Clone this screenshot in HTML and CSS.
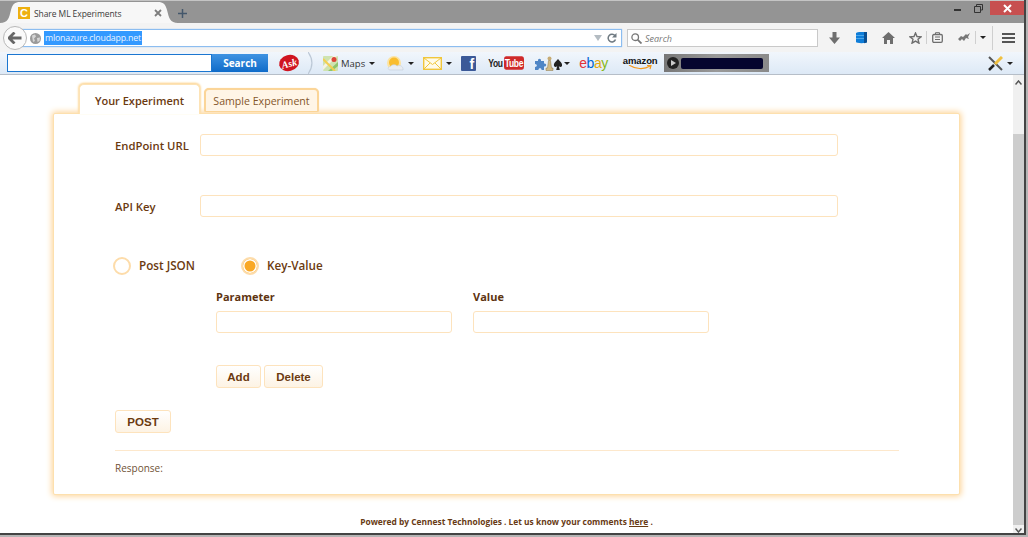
FILE: index.html
```html
<!DOCTYPE html>
<html lang="en">
<head>
<meta charset="utf-8">
<title>Share ML Experiments</title>
<link rel="stylesheet" href="styles.css">
</head>
<body>
<div class="window">
  <header class="titlebar">
    <div class="browser-tab">
      <svg class="tab-shape" width="178" height="23" viewBox="0 0 178 23"><path d="M0 23C8 23 9 18 11 10C12.500 4 15 2 20 2H158C163 2 165.500 4 167 10C169 18 170 23 178 23Z" fill="#f7f7f7"/></svg>
      <span class="favicon">C</span>
      <span class="tab-title">Share ML Experiments</span>
      <svg class="tab-close" width="8" height="8" viewBox="0 0 8 8"><path d="M1 1L7 7M7 1L1 7" stroke="#7d7d7d" stroke-width="1.800"/></svg>
    </div>
    <svg class="new-tab" width="9" height="9" viewBox="0 0 9 9"><path d="M4.500 0V9M0 4.500H9" stroke="#44576b" stroke-width="1.500"/></svg>
    <div class="window-controls">
      <span class="win-min"></span>
      <svg class="win-restore" width="9" height="9" viewBox="0 0 9 9"><path d="M2.500 2V.5H8.500V6H7M.5 2.500H6.500V8.500H.5Z" fill="none" stroke="#333"/></svg>
      <span class="win-close"><svg width="9" height="9" viewBox="0 0 9 9"><path d="M1 1L8 8M8 1L1 8" stroke="#fff" stroke-width="2"/></svg></span>
    </div>
  </header>

  <nav class="navbar">
    <span class="back-btn"><svg width="14" height="12" viewBox="0 0 14 12"><path d="M6.500 .5L1 6L6.500 11.500M1.500 6H13.500" fill="none" stroke="#666" stroke-width="2.800"/></svg></span>
    <div class="urlbar">
      <svg class="globe" width="11" height="11" viewBox="0 0 11 11"><circle cx="5.500" cy="5.500" r="5.500" fill="#9a9a9a"/><path d="M2 2.500L5 1.500L6 3.500L4 5.500L5 8L3 9ZM7 5L10 4.500L9.500 8L7.500 9Z" fill="#d5d5d5"/></svg>
      <span class="url-text">mlonazure.cloudapp.net</span>
      <svg class="url-drop" width="8" height="6" viewBox="0 0 8 6"><path d="M0 0H8L4 6Z" fill="#b4bcc2"/></svg>
      <svg class="url-reload" width="10" height="10" viewBox="0 0 10 10"><path d="M8.500 6.500A3.800 3.800 0 1 1 8 2.800" fill="none" stroke="#6f7a82" stroke-width="1.500"/><path d="M9.500 0V4.500H5Z" fill="#6f7a82"/></svg>
    </div>
    <div class="searchbar">
      <svg width="11" height="11" viewBox="0 0 11 11"><circle cx="4.200" cy="4.200" r="3.300" fill="none" stroke="#777" stroke-width="1.300"/><path d="M6.800 6.800L10.500 10.500" stroke="#777" stroke-width="1.800"/></svg>
      <span class="search-ph">Search</span>
    </div>
    <div class="nav-icons">
      <svg class="ni-download" width="11" height="12" viewBox="0 0 11 12"><path d="M3.500 0H7.500V5.500H11L5.500 12L0 5.500H3.500Z" fill="#6e6e6e"/></svg>
      <svg class="ni-db" width="11" height="13" viewBox="0 0 11 13"><path d="M0 2C0 .5 11 .5 11 2V11C11 12.500 0 12.500 0 11Z" fill="#0f7dd8"/><path d="M0 4.500H11M0 7.500H11" stroke="#4aa6ea"/><path d="M8 1H11V11C11 11.800 9.500 12 8 12.200Z" fill="#0a4f92"/></svg>
      <svg class="ni-home" width="13" height="12" viewBox="0 0 13 12"><path d="M6.500 0L13 6H11V12H8V8H5V12H2V6H0Z" fill="#6e6e6e"/></svg>
      <svg class="ni-star" width="13" height="12" viewBox="0 0 13 12"><path d="M6.500 1L8 4.500L12 4.800L9 7.300L10 11.200L6.500 9.100L3 11.200L4 7.300L1 4.800L5 4.500Z" fill="none" stroke="#6e6e6e" stroke-width="1.400"/></svg>
      <span class="ni-sep"></span>
      <svg class="ni-clip" width="11" height="11" viewBox="0 0 11 11"><rect x=".7" y="2.500" width="9.600" height="7.800" rx="1.200" fill="none" stroke="#6e6e6e" stroke-width="1.300"/><path d="M3.500 2.500V.7H7.500V2.500M3 5H8M3 7.500H8" fill="none" stroke="#6e6e6e"/></svg>
      <svg class="ni-bat" width="12" height="9" viewBox="0 0 12 9"><path d="M0 6L3 3L5 4L8 1L9 2L12 0L10 4L11 6L8 5L6 8L4 6L2 8Z" fill="#777"/></svg>
      <span class="ni-sep ni-sep-b"></span>
      <span class="caret caret-dark"></span>
      <span class="ni-sep ni-sep-tall"></span>
      <span class="menu-btn"><i></i><i></i><i></i></span>
    </div>
  </nav>

  <div class="bookmarks">
    <div class="bm-search"><span class="bm-input"></span><span class="bm-button">Search</span></div>
    <span class="ask"><span>Ask</span></span>
    <svg class="bm-curve" width="5" height="22" viewBox="0 0 5 22"><path d="M0 0C5 7 5 15 0 22" fill="none" stroke="#bcc8d6" stroke-width="1.200"/></svg>
    <svg class="bm-maps" width="15" height="15" viewBox="0 0 15 15"><rect width="15" height="15" rx="1" fill="#cfe3b0"/><path d="M0 10L10 0H14L0 14Z" fill="#f6f2e4"/><path d="M5 15L15 6V10L9 15Z" fill="#8ec56b"/><path d="M0 3L12 15" stroke="#f4cf50" stroke-width="2"/><circle cx="11" cy="3.500" r="2.500" fill="#dc4437"/></svg>
    <span class="bm-label">Maps</span>
    <span class="caret"></span>
    <svg class="bm-weather" width="18" height="15" viewBox="0 0 18 15"><circle cx="8" cy="7" r="7" fill="#fce3a0"/><circle cx="8" cy="6.500" r="5" fill="#f9bd2e"/><path d="M4 14C1.500 14 1.500 10.500 4.500 10.500C5.500 8.500 9.500 8 11 10C14 8.500 17.500 10.500 17 14Z" fill="#e9edf2" stroke="#c5ced8" stroke-width=".6"/></svg>
    <span class="caret"></span>
    <svg class="bm-mail" width="19" height="13" viewBox="0 0 19 13"><rect x=".7" y=".7" width="17.600" height="11.600" fill="#fffbe8" stroke="#f0c63c" stroke-width="1.400"/><path d="M1 1L9.500 7.500L18 1M1 12L7 6M18 12L12 6" fill="none" stroke="#f0c63c"/></svg>
    <span class="caret"></span>
    <span class="fb">f</span>
    <span class="yt">You<b>Tube</b></span>
    <svg class="bm-puzzle" width="29" height="15" viewBox="0 0 29 15"><path d="M1 5H4C3.500 2 7.500 2 7 5H10V7.500C13 7 13 11 10 10.500V14H7.500C8 11.500 4 11.500 4.500 14H1V11C3.500 11 3.500 8 1 8Z" fill="#4f86c6"/><circle cx="15.500" cy="2.500" r="2" fill="#c7ab74"/><path d="M14.500 4.500H16.500L17.500 12H19V14.500H12V12H13.500Z" fill="#d3bc86" stroke="#8d7748" stroke-width=".5"/><path d="M24 3C26.500 6 28.500 7 28 10C27 11.500 25.500 11 24.800 10L25.800 14H22.200L23.200 10C22.500 11 21 11.500 20 10C19.500 7 21.500 6 24 3Z" fill="#222"/></svg>
    <span class="caret caret-tight"></span>
    <span class="ebay"><i class="e-r">e</i><i class="e-b">b</i><i class="e-y">a</i><i class="e-g">y</i></span>
    <span class="amazon">amazon<svg width="24" height="5" viewBox="0 0 24 5"><path d="M1 0C7 4 16 5 22 1M19 0.500L23 .5L22 4" fill="none" stroke="#f39a1d" stroke-width="1.200"/></svg></span>
    <div class="player">
      <span class="play-btn"><svg width="6" height="6" viewBox="0 0 6 6"><path d="M1 0L6 3L1 6Z" fill="#ccc"/></svg></span>
      <span class="play-bar"></span>
    </div>
    <svg class="bm-tools" width="15" height="15" viewBox="0 0 15 15"><path d="M1 1L14 14" stroke="#555" stroke-width="2"/><path d="M14 1L7 8" stroke="#f0c040" stroke-width="3"/><path d="M6 9L1 14" stroke="#222" stroke-width="2.500"/></svg>
    <span class="caret"></span>
  </div>

  <div class="viewport">
    <main class="page">
      <div class="tabs">
        <span class="tab tab-active">Your Experiment</span>
        <span class="tab tab-idle">Sample Experiment</span>
      </div>
      <section class="card">
        <div class="field field-url">
          <label class="field-label">EndPoint URL</label>
          <span class="input input-wide"></span>
        </div>
        <div class="field field-key">
          <label class="field-label">API Key</label>
          <span class="input input-wide"></span>
        </div>
        <div class="radios">
          <span class="radio"></span><span class="radio-label">Post JSON</span>
          <span class="radio radio-on"></span><span class="radio-label">Key-Value</span>
        </div>
        <div class="params">
          <div class="param">
            <div class="param-label">Parameter</div>
            <span class="input input-param"></span>
          </div>
          <div class="param">
            <div class="param-label">Value</div>
            <span class="input input-param"></span>
          </div>
        </div>
        <div class="actions">
          <span class="btn btn-add">Add</span>
          <span class="btn btn-del">Delete</span>
        </div>
        <span class="btn btn-post">POST</span>
        <hr class="rule">
        <div class="response">Response:</div>
      </section>
      <footer class="footer">Powered by Cennest Technologies . Let us know your comments <a>here</a> .</footer>
    </main>
    <aside class="scrollbar">
      <svg width="7" height="5" viewBox="0 0 7 5"><path d="M.5 4.500L3.500 1L6.500 4.500" fill="none" stroke="#555" stroke-width="1.500"/></svg>
      <span class="thumb"></span>
      <svg width="7" height="5" viewBox="0 0 7 5"><path d="M.5 .5L3.500 4L6.500 .5" fill="none" stroke="#555" stroke-width="1.500"/></svg>
    </aside>
  </div>
</div>
</body>
</html>
```
FILE: styles.css
```css
* { box-sizing: border-box; }
html, body { margin: 0; height: 100%; overflow: hidden; background: #b5b5b5; }
body { font-family: "Open Sans", "Liberation Sans", sans-serif; color: #6b3a10; }

.window {
  width: 1026px; height: 535px; display: flex; flex-direction: column;
  background: #fff; border-right: 2px solid #444; border-bottom: 2px solid #444;
}

/* title bar */
.titlebar {
  height: 23px; flex: none; display: flex; align-items: flex-start;
  background: #949494; border-top: 1px solid #c4c4c4;
}
.browser-tab {
  position: relative; width: 178px; height: 22px; flex: none;
  display: flex; align-items: center; padding: 2px 0 0 18px;
}
.tab-shape { position: absolute; left: 0; top: -1px; }
.favicon {
  position: relative; width: 12px; height: 12px; background: #eeb00f; color: #fff;
  font: bold 11px/12px "Liberation Sans", sans-serif; text-align: center;
}
.tab-title { position: relative; margin-left: 4px; font-size: 8.500px; letter-spacing: -.08px; color: #3b3b3b; width: 114px; white-space: nowrap; }
.tab-close { position: relative; margin-left: 6px; }
.new-tab { margin: 8px 0 0 0; }
.window-controls { margin-left: auto; display: flex; align-items: flex-start; }
.win-min { width: 7px; height: 2px; background: #333; margin: 8px 13px 0 0; }
.win-restore { margin: 3px 7px 0 0; }
.win-close { width: 34px; height: 14px; background: #c75050; display: flex; align-items: center; justify-content: center; }

/* nav bar */
.navbar {
  height: 29px; flex: none; display: flex; align-items: center;
  background: #f3f3f3; padding: 0 0 0 3px; position: relative;
}
.back-btn {
  width: 24px; height: 24px; border-radius: 50%; background: #fafafa; border: 1px solid #b8b8b8;
  display: flex; align-items: center; justify-content: center; flex: none; position: relative; z-index: 1;
}
.urlbar {
  width: 607px; height: 18px; margin: 1px 0 0 -12px; flex: none; display: flex; align-items: center;
  background: #fff; border: 1px solid #8cbdf0; box-shadow: 0 0 1px #8cbdf0; padding: 0 4px 0 14px;
}
.globe { flex: none; }
.url-text {
  margin-left: 3px; background: #3399ff; color: #e8f3ff; font-size: 8.800px; letter-spacing: -.2px; line-height: 14px; padding: 0 1px; white-space: nowrap;
}
.url-drop { margin-left: auto; }
.url-reload { margin-left: 5px; }
.searchbar {
  width: 191px; height: 18px; margin: 1px 0 0 5px; flex: none; display: flex; align-items: center; gap: 3px;
  background: #fff; border: 1px solid #c9c9c9; padding-left: 3px;
}
.search-ph { font-size: 9px; font-style: italic; color: #777; }
.nav-icons { display: flex; align-items: center; flex: 1; height: 100%; position: relative; }
.ni-download { margin-left: 11px; }
.ni-db { margin-left: 16px; }
.ni-home { margin-left: 15px; }
.ni-star { margin-left: 14px; }
.ni-sep { width: 1px; height: 13px; background: #cfcfcf; margin-left: 4px; }
.ni-clip { margin-left: 5px; }
.ni-bat { margin-left: 15px; }
.ni-sep-b { margin-left: 5px; }
.caret { width: 0; height: 0; border: 3px solid transparent; border-top: 3px solid #222; border-bottom: 0; flex: none; }
.caret-dark { margin-left: 4px; border-width: 3px 3px 0; }
.ni-sep-tall { height: 24px; margin-left: 6px; }
.menu-btn { display: flex; flex-direction: column; gap: 2px; width: 13px; margin-left: 9px; }
.menu-btn i { display: block; height: 2px; background: #555; }

/* bookmarks */
.bookmarks {
  height: 23px; flex: none; display: flex; align-items: center; padding: 0 11px 0 7px;
  background: linear-gradient(#f1f6fc, #dde9f6); border-bottom: 1px solid #b6bec8;
}
.bm-search { display: flex; width: 261px; height: 18px; flex: none; }
.bm-input { width: 205px; background: #fff; border: 1px solid #1b76d0; }
.bm-button {
  width: 56px; background: linear-gradient(#3f93e2, #0f6bc9); color: #fff; font-size: 10px; font-weight: 700;
  text-align: center; line-height: 18px;
}
.ask {
  width: 20px; height: 16px; margin-left: 11px; border-radius: 50%; background: #d01420; color: #fff; flex: none;
  display: flex; align-items: center; justify-content: center; font: italic bold 10px "Liberation Serif", serif;
  transform: rotate(-14deg);
}
.bm-curve { margin-left: 9px; }
.bm-maps { margin-left: 10px; }
.bm-label { margin-left: 3px; font-size: 9.500px; color: #333; }
.bookmarks .caret { margin-left: 4px; }
.bookmarks .caret-tight { margin-left: 1px; }
.bm-weather { margin-left: 11px; }
.bm-mail { margin-left: 9px; }
.fb {
  width: 15px; height: 15px; margin-left: 9px; background: #3b5998; color: #fff; flex: none;
  font: bold 14px/17px "Liberation Sans", sans-serif; text-align: right; padding-right: 2px; border-radius: 1px;
}
.yt {
  margin-left: 12px; width: 34px; flex: none; display: flex; align-items: center; font: bold 8.500px "Liberation Sans", sans-serif; color: #222;
  letter-spacing: -.3px; transform: scaleY(1.350); white-space: nowrap;
}
.yt b { background: #cf2a2a; color: #fff; border-radius: 2px; padding: 0 1px; margin-left: 1px; line-height: 10px; }
.bm-puzzle { margin-left: 12px; }
.ebay { margin-left: 9px; font: 14px/14px "Liberation Sans", sans-serif; letter-spacing: -.4px; width: 32px; flex: none; }
.ebay i { font-style: normal; }
.e-r { color: #e53238; } .e-b { color: #0064d2; } .e-y { color: #e2a90d; } .e-g { color: #86b817; }
.amazon {
  margin-left: 11px; width: 36px; flex: none; display: flex; flex-direction: column; align-items: center;
  font: bold 9.500px/9px "Liberation Sans", sans-serif; color: #111; letter-spacing: -.1px;
}
.player {
  width: 105px; height: 18px; margin-left: 6px; display: flex; align-items: center; gap: 2px; flex: none;
  background: linear-gradient(90deg, #777, #999 50%, #8a8a8a); padding: 0 6px 0 3px;
}
.play-btn { width: 12px; height: 12px; border-radius: 50%; background: #222; display: flex; align-items: center; justify-content: center; flex: none; }
.play-bar { flex: 1; height: 11px; background: #05052e; border-radius: 2px; }
.bm-tools { margin-left: auto; }

/* page */
.viewport { flex: 1; display: flex; min-height: 0; }
.page { flex: 1; min-width: 0; display: flex; flex-direction: column; padding: 9px 0 0 53px; }
.scrollbar { width: 11px; flex: none; background: #f0f0f0; display: flex; flex-direction: column; align-items: center; padding-top: 5px; }
.thumb { width: 11px; height: 391px; background: #cdcdcd; margin: 49px 0 3px; flex: none; }

.tabs { display: flex; align-items: flex-end; padding-left: 26px; gap: 4px; height: 29px; flex: none; position: relative; z-index: 1; }
.tab { border-radius: 5px 5px 0 0; white-space: nowrap; display: flex; align-items: center; justify-content: center; }
.tab-active {
  width: 121px; height: 30px; margin-bottom: -1px; background: #fff; font-size: 11px; font-weight: 600; color: #6b3a10;
  border: 1px solid #fde3b6; border-bottom: 0; box-shadow: -1px -1px 2px #fddca4, 1px -1px 2px #fddca4; padding-top: 1px;
}
.tab-idle {
  width: 115px; height: 24px; margin-bottom: 1px; background: #fff5e6; color: #84552a; font-size: 10.600px; font-weight: 400;
  border: 2px solid #fbd598; border-bottom-width: 1px; border-radius: 5px 5px 2px 2px; box-shadow: 0 0 1px #fbd598;
}

.card {
  width: 907px; height: 382px; flex: none; background: #fff; border-radius: 2px; padding: 0 61px;
  border: 1px solid #fde0ae; box-shadow: 0 0 6px 1px #fdd292;
  display: flex; flex-direction: column; align-items: flex-start;
}
.field { display: flex; align-items: center; }
.field-url { margin-top: 20px; }
.field-key { margin-top: 39px; }
.field-label { width: 85px; font-size: 11.300px; font-weight: 600; color: #6b3a10; white-space: nowrap; flex: none; }
.input { display: block; height: 22px; background: #fff; border: 1px solid #fde3bd; border-radius: 3px; flex: none; }
.input-wide { width: 638px; }
.input-param { width: 236px; }

.radios { display: flex; align-items: center; margin: 40px 0 0 -2px; height: 18px; }
.radio { width: 18px; height: 18px; border-radius: 50%; border: 2px solid #fddcaa; background: #fff; flex: none; }
.radio-on { background: #f9a825; box-shadow: inset 0 0 0 1.500px #fff; }
.radio-label { font-size: 11.700px; font-weight: 600; color: #6b3a10; margin-left: 8px; width: 102px; white-space: nowrap; padding-bottom: 2px; }

.params { display: flex; gap: 21px; margin: 14px 0 0 101px; }
.param-label { font-size: 11px; font-weight: 700; color: #5e3310; line-height: 15px; margin-bottom: 7px; }

.actions { display: flex; gap: 3px; margin: 32px 0 0 101px; }
.btn {
  display: flex; align-items: center; justify-content: center; height: 23px;
  background: linear-gradient(#fff, #fdf3e4); border: 1px solid #fde3bd; border-radius: 3px;
  font: bold 11.500px "Liberation Sans", sans-serif; color: #6b3a10; flex: none;
}
.btn-add { width: 45px; }
.btn-del { width: 59px; }
.btn-post { width: 56px; margin-top: 22px; }
.rule { width: 784px; height: 1px; border: 0; background: #fde8cc; margin: 17px 0 0; flex: none; }
.response { font-size: 10px; color: #6f5236; margin-top: 10px; }

.footer { width: 907px; margin-top: 21px; text-align: center; font-size: 8.400px; font-weight: 700; color: #683a14; }
.footer a { text-decoration: underline; }
```
